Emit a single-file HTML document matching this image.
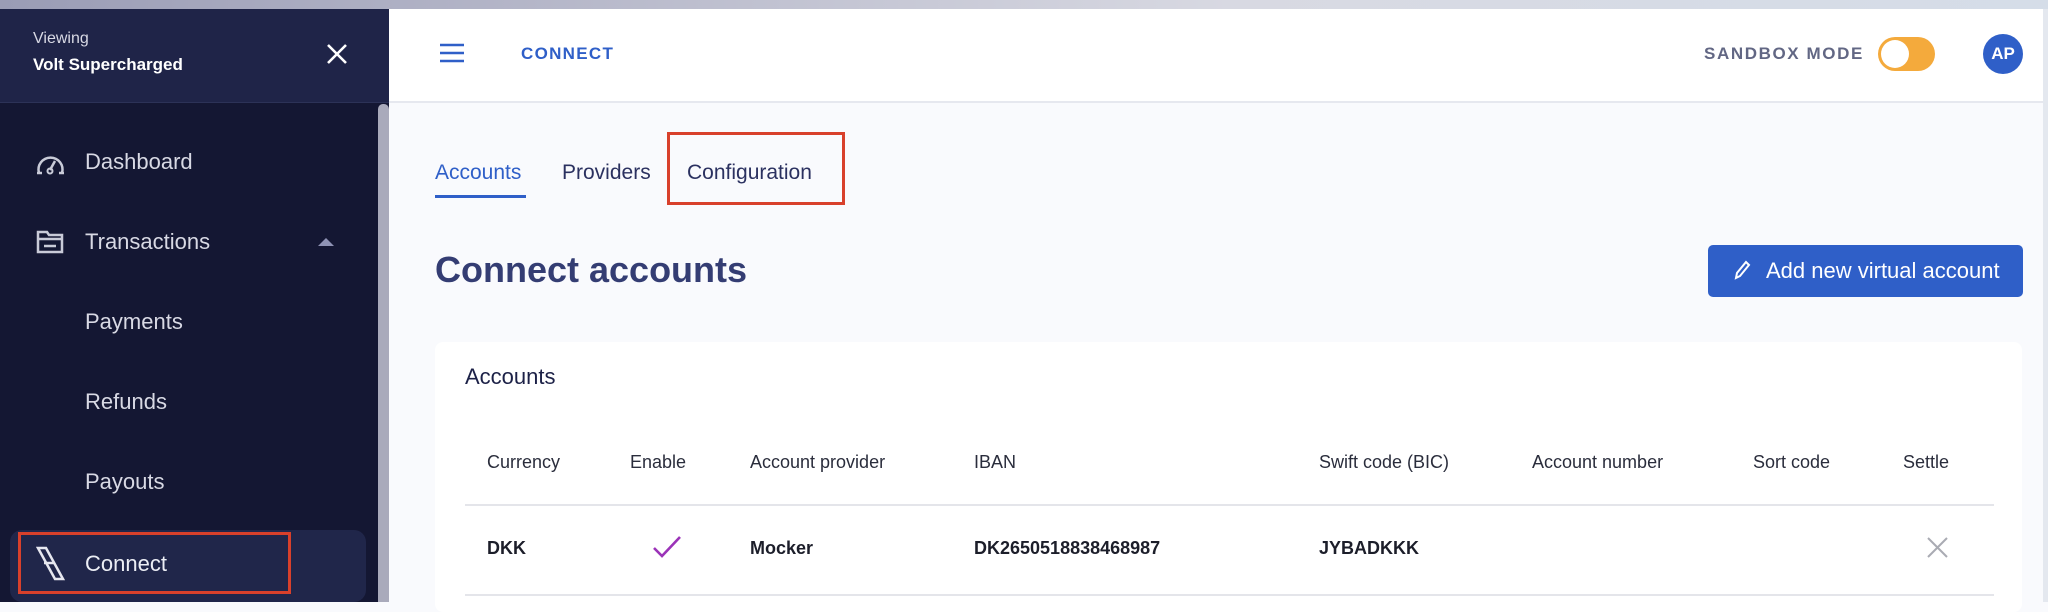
<!DOCTYPE html>
<html><head><meta charset="utf-8"><style>
*{margin:0;padding:0;box-sizing:border-box}
body{width:2048px;height:602px;overflow:hidden;font-family:"Liberation Sans",sans-serif;background:#f9fafd;position:relative}
.a{position:absolute;white-space:nowrap}
</style></head><body>
<div class="a" style="left:0;top:0;width:2048px;height:9px;background:linear-gradient(90deg,#9a9cb5,#d8d9e2 60%,#d5dde8)"></div>
<!-- sidebar -->
<div class="a" style="left:0;top:9px;width:389px;height:593px;background:#141733"></div>
<div class="a" style="left:0;top:9px;width:389px;height:94px;background:#1f2448;border-bottom:1px solid #2c3257"></div>
<div class="a" style="left:33px;top:30px;color:#d8d9e4;font-size:16px">Viewing</div>
<div class="a" style="left:33px;top:55px;color:#fff;font-size:17px;font-weight:bold">Volt Supercharged</div>
<svg class="a" style="left:326px;top:43px" width="22" height="22" viewBox="0 0 22 22"><path d="M2 2L20 20M20 2L2 20" stroke="#fff" stroke-width="2.6"/></svg>
<div class="a" style="left:378px;top:104px;width:11px;height:498px;background:#a9aabb;border-radius:5px 5px 0 0"></div>
<svg class="a" style="left:35px;top:148px" width="31" height="28" viewBox="0 0 31 28"><path d="M4 25A12 12 0 1 1 27 25" fill="none" stroke="#c9cbd8" stroke-width="2.5"/><path d="M2 25h5M24 25h5" stroke="#c9cbd8" stroke-width="2.5"/><path d="M15 22l5-9" stroke="#c9cbd8" stroke-width="2.5"/><circle cx="15" cy="23" r="2.5" fill="none" stroke="#c9cbd8" stroke-width="2"/></svg>
<div class="a" style="left:85px;top:149px;color:#d8d9e4;font-size:22px">Dashboard</div>
<svg class="a" style="left:36px;top:230px" width="28" height="24" viewBox="0 0 28 24"><path d="M2 2h9l2 3h13v17H2z" fill="none" stroke="#c9cbd8" stroke-width="2.5"/><path d="M2 9h24M8 16h12" stroke="#c9cbd8" stroke-width="2.5"/></svg>
<div class="a" style="left:85px;top:229px;color:#d8d9e4;font-size:22px">Transactions</div>
<svg class="a" style="left:318px;top:237px" width="16" height="9"><path d="M0 9L8 1L16 9z" fill="#8f93b5"/></svg>
<div class="a" style="left:85px;top:309px;color:#d8d9e4;font-size:22px">Payments</div>
<div class="a" style="left:85px;top:389px;color:#d8d9e4;font-size:22px">Refunds</div>
<div class="a" style="left:85px;top:469px;color:#d8d9e4;font-size:22px">Payouts</div>
<div class="a" style="left:10px;top:530px;width:356px;height:72px;background:#20264a;border-radius:12px"></div>
<div class="a" style="left:18px;top:532px;width:273px;height:62px;border:3px solid #d8402b"></div>
<svg class="a" style="left:36px;top:546px" width="30" height="36" viewBox="0 0 30 36"><path d="M2 2h8l17 31h-8z" fill="none" stroke="#e6e7ef" stroke-width="2.5"/><path d="M8 17h11" stroke="#e6e7ef" stroke-width="2.5"/></svg>
<div class="a" style="left:85px;top:551px;color:#eceef5;font-size:22px">Connect</div>
<!-- header -->
<div class="a" style="left:389px;top:9px;width:1654px;height:94px;background:#fff;border-bottom:2px solid #e6e8ef"></div>
<div class="a" style="left:2043px;top:9px;width:5px;height:593px;background:#e4e8ef"></div>
<svg class="a" style="left:440px;top:43px" width="24" height="20"><path d="M0 2h24M0 10h24M0 18h24" stroke="#2f5fc8" stroke-width="2.6"/></svg>
<div class="a" style="left:521px;top:44px;color:#2f5fc8;font-size:17px;font-weight:bold;letter-spacing:1.3px">CONNECT</div>
<div class="a" style="left:1704px;top:44px;color:#626784;font-size:17px;font-weight:bold;letter-spacing:1.6px">SANDBOX MODE</div>
<div class="a" style="left:1878px;top:37px;width:57px;height:34px;border-radius:17px;background:#f4aa3c"></div>
<div class="a" style="left:1881px;top:40px;width:28px;height:28px;border-radius:50%;background:#fff"></div>
<div class="a" style="left:1983px;top:34px;width:40px;height:40px;border-radius:50%;background:#2f5fc8;color:#fff;font-weight:bold;font-size:17px;line-height:40px;text-align:center">AP</div>
<!-- tabs -->
<div class="a" style="left:435px;top:161px;color:#2f5fc8;font-size:21px">Accounts</div>
<div class="a" style="left:435px;top:195px;width:91px;height:3px;background:#2f5fc8"></div>
<div class="a" style="left:562px;top:161px;color:#2b3160;font-size:21px">Providers</div>
<div class="a" style="left:687px;top:161px;color:#2b3160;font-size:21px">Configuration</div>
<div class="a" style="left:667px;top:132px;width:178px;height:73px;border:3px solid #d8402b"></div>
<div class="a" style="left:435px;top:249px;color:#343d73;font-size:36px;font-weight:bold">Connect accounts</div>
<div class="a" style="left:1708px;top:245px;width:315px;height:52px;background:#2f5fc8;border-radius:5px"></div>
<svg class="a" style="left:1733px;top:260px" width="18" height="20" viewBox="0 0 18 20"><path d="M3 18l1-5L13 2l3 3-9 11z" fill="none" stroke="#fff" stroke-width="2"/></svg>
<div class="a" style="left:1766px;top:258px;color:#fff;font-size:22px">Add new virtual account</div>
<!-- card -->
<div class="a" style="left:435px;top:342px;width:1587px;height:270px;background:#fff;border-radius:8px"></div>
<div class="a" style="left:465px;top:364px;color:#1c2147;font-size:22px">Accounts</div>
<div class="a" style="left:0;top:452px;font-size:18px;color:#2a2d3c;width:2048px;height:24px">
<span class="a" style="left:487px">Currency</span><span class="a" style="left:630px">Enable</span><span class="a" style="left:750px">Account provider</span><span class="a" style="left:974px">IBAN</span><span class="a" style="left:1319px">Swift code (BIC)</span><span class="a" style="left:1532px">Account number</span><span class="a" style="left:1753px">Sort code</span><span class="a" style="left:1903px">Settle</span></div>
<div class="a" style="left:465px;top:504px;width:1529px;height:2px;background:#e4e5ea"></div>
<div class="a" style="left:0;top:538px;font-size:18px;color:#1c1e2a;font-weight:bold;width:2048px;height:24px">
<span class="a" style="left:487px">DKK</span><span class="a" style="left:750px">Mocker</span><span class="a" style="left:974px">DK2650518838468987</span><span class="a" style="left:1319px">JYBADKKK</span></div>
<svg class="a" style="left:652px;top:535px" width="30" height="24"><path d="M2 13l8 8L28 2" fill="none" stroke="#9b33b8" stroke-width="2.6"/></svg>
<svg class="a" style="left:1927px;top:537px" width="21" height="21"><path d="M1 1l19 19M20 1L1 20" stroke="#a9abb3" stroke-width="2"/></svg>
<div class="a" style="left:465px;top:594px;width:1529px;height:2px;background:#e4e5ea"></div>
</body></html>
